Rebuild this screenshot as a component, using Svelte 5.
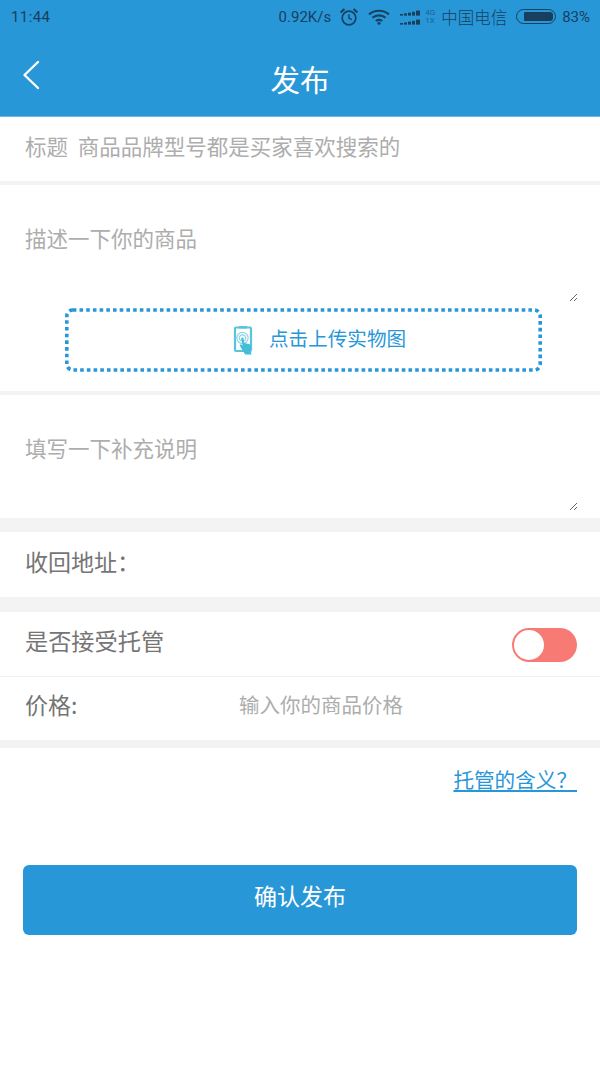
<script>
  let hosted = $state(true);
</script>

<div class="page">
  <header class="head">
    <div class="status">
      <span class="time">11:44</span>
      <div class="status-right">
        <span class="speed">0.92K/s</span>
        <svg class="ic-alarm" width="20" height="20" viewBox="0 0 20 20" fill="none" stroke="#17405f" stroke-width="1.7">
          <circle cx="10" cy="11" r="6.8" />
          <path d="M10 7.2V11.2L12.8 12.6" stroke-width="1.4" />
          <path d="M1.6 5.6 5.4 2M18.4 5.6 14.6 2" stroke-width="2.1" />
        </svg>
        <svg class="ic-wifi" width="22" height="16" viewBox="0 0 22 16" fill="none" stroke="#17405f" stroke-width="2.1">
          <path d="M1 5.4C6.6.6 15.4.6 21 5.4" />
          <path d="M4.4 8.8C8.2 5.6 13.8 5.6 17.6 8.8" />
          <path d="M7.8 12C9.8 10.6 12.2 10.6 14.2 12" />
          <circle cx="11" cy="14.2" r="1.5" fill="#17405f" stroke="none" />
        </svg>
        <svg class="ic-signal" width="21" height="16" viewBox="0 0 21 16" fill="#17405f">
          <rect x="0" y="5" width="3" height="1.6" /><rect x="4" y="4.4" width="3" height="2.2" /><rect x="8" y="3.6" width="3" height="3" /><rect x="12" y="2.8" width="3" height="3.8" /><rect x="16" y="1.6" width="4" height="5" />
          <rect x="0" y="14" width="3" height="1.6" /><rect x="4" y="13.4" width="3" height="2.2" /><rect x="8" y="12.6" width="3" height="3" /><rect x="12" y="11.8" width="3" height="3.8" /><rect x="16" y="10.6" width="4" height="5" />
        </svg>
        <span class="net"><span>4G</span><span>1X</span></span>
        <span class="carrier">中国电信</span>
        <span class="battery"><span class="battery-fill"></span></span>
        <span class="pct">83%</span>
      </div>
    </div>
    <div class="nav">
      <button class="back" aria-label="返回">
        <svg width="18" height="30" viewBox="0 0 18 30" fill="none" stroke="#fff" stroke-width="2.4" stroke-linecap="round" stroke-linejoin="round">
          <path d="M16 2 2.5 15 16 28" />
        </svg>
      </button>
      <h1>发布</h1>
    </div>
  </header>

  <section class="title-row">
    <input class="title-input" placeholder="标题  商品品牌型号都是买家喜欢搜索的" />
  </section>

  <section class="desc">
    <textarea class="area area-top" placeholder="描述一下你的商品"></textarea>
    <button class="upload">
      <svg class="dots" width="477" height="64" viewBox="0 0 477 64" fill="none">
        <rect x="1.8" y="2" width="473.4" height="60" rx="6" stroke="#2897d8" stroke-width="3.6" stroke-dasharray="3.6 3.1" />
      </svg>
      <svg width="24" height="30" viewBox="0 0 24 30">
        <rect x="3" y="2.5" width="16" height="23.5" rx="1" fill="#fff" stroke="#5cc3dc" stroke-width="2.2" />
        <rect x="7" y="1" width="8" height="2.5" fill="#5cc3dc" />
        <circle cx="10.5" cy="13" r="5.6" fill="none" stroke="#8fd6e6" stroke-width="1.2" />
        <circle cx="10.5" cy="13" r="3.2" fill="none" stroke="#8fd6e6" stroke-width="1.2" />
        <path d="M9.2 13.5c0-1.4 2.4-1.4 2.4 0l.6 4.6 4.8 1c1.4.4 2.2 1.2 2 2.6l-.4 4.6 1 3.2h-6.4l-4.4-7-1.2-2.6 1.6-.6 1.6 1.4z" fill="#45bcd8" />
      </svg>
      <span class="upload-text">点击上传实物图</span>
    </button>
  </section>

  <section class="note">
    <textarea class="area area-note" placeholder="填写一下补充说明"></textarea>
  </section>

  <section class="row address">
    <span class="label">收回地址：</span>
  </section>

  <section class="hosting">
    <div class="row row-switch">
      <span class="label switch-label">是否接受托管</span>
      <button class="switch" class:on={hosted} aria-label="是否接受托管" onclick={() => (hosted = !hosted)}>
        <span class="knob"></span>
      </button>
    </div>
    <div class="row row-price">
      <span class="label price-label">价格:</span>
      <input class="price-input" placeholder="输入你的商品价格" />
    </div>
  </section>

  <div class="link-row">
    <a href="#meaning">托管的含义？</a>
  </div>

  <div class="submit-wrap">
    <button class="submit">确认发布</button>
  </div>
</div>

<style>
  :global(body) {
    background: #fff;
    font-family: "Noto Sans CJK SC", "Noto Sans", sans-serif;
  }

  .page {
    width: 600px;
    height: 1067px;
    overflow: hidden;
    background: #fff;
  }

  .head {
    height: 116px;
    background: #2897d8;
    border-bottom: 1px solid #6fb9e6;
  }

  .status {
    height: 33px;
    padding: 0 10px 0 11px;
    display: flex;
    align-items: center;
    justify-content: space-between;
    color: #17405f;
    font-family: Roboto, sans-serif;
    font-size: 15px;
  }

  .time { letter-spacing: 0.4px; }

  .status-right {
    display: flex;
    align-items: center;
  }

  .speed { margin-right: 8px; }
  .ic-alarm { margin-right: 9px; }
  .ic-wifi { margin-right: 10px; }
  .ic-signal { margin-right: 4px; }

  .net {
    display: flex;
    flex-direction: column;
    font-size: 8px;
    line-height: 8px;
    margin-right: 6px;
    opacity: 0.6;
  }

  .carrier {
    font-family: "Noto Sans CJK SC", sans-serif;
    font-size: 16.5px;
    font-weight: 300;
    margin-right: 9px;
  }

  .battery {
    width: 40px;
    height: 15px;
    box-sizing: border-box;
    border: 1.5px solid #17405f;
    border-radius: 7.5px;
    padding: 2px 2.5px 2px 7px;
    margin-right: 6px;
    display: flex;
  }

  .battery-fill {
    flex: 1;
    background: #17405f;
    border-radius: 1px 3px 3px 1px;
  }

  .nav {
    height: 83px;
    display: flex;
    align-items: center;
    justify-content: center;
    position: relative;
  }

  .nav h1 {
    margin: 9px 0 0;
    color: #fff;
    font-size: 29.5px;
    font-weight: 400;
    line-height: 1;
  }

  .back {
    position: absolute;
    left: 22px;
    top: 27px;
    padding: 0;
    border: none;
    background: none;
    display: flex;
  }

  input, textarea {
    border: none;
    outline: none;
    background: transparent;
    font-family: inherit;
    padding: 0;
    margin: 0;
  }

  input::placeholder, textarea::placeholder {
    color: #adadad;
    opacity: 1;
  }

  .title-row {
    height: 64px;
    border-bottom: 4px solid #f3f3f3;
    display: flex;
    align-items: center;
    padding: 0 25px;
  }

  .title-input {
    width: 100%;
    font-size: 21.5px;
    white-space: pre;
    padding-bottom: 7px;
  }

  .desc {
    height: 206px;
    border-bottom: 4px solid #f3f3f3;
    display: flex;
    flex-direction: column;
  }

  .area {
    display: block;
    box-sizing: border-box;
    width: 578px;
    margin-left: 0;
    padding: 0 0 0 25px;
    font-size: 21.5px;
    line-height: 30px;
  }

  .area-top {
    height: 117px;
    padding-top: 38px;
  }

  .upload {
    position: relative;
    width: 477px;
    height: 64px;
    margin: 6px 0 0 65px;
    border: none;
    background: #fff;
    color: #2897d8;
    font-family: inherit;
    font-size: 19.6px;
    display: flex;
    align-items: center;
    justify-content: center;
    gap: 13px;
    padding: 0 0 0 31px;
  }

  .upload-text { padding-bottom: 6px; }

  .dots {
    position: absolute;
    left: 0;
    top: 0;
  }

  .note { height: 123px; }

  .area-note {
    height: 116px;
    padding-top: 38px;
  }

  .row {
    display: flex;
    align-items: center;
    padding: 0 23px 0 25px;
    background: #fff;
  }

  .label {
    color: #757575;
    font-size: 23px;
    padding-bottom: 8px;
  }

  .address {
    height: 65px;
    border-top: 14px solid #f3f3f3;
    border-bottom: 15px solid #f3f3f3;
  }

  .hosting { border-bottom: 8px solid #f3f3f3; }

  .row-switch {
    height: 64px;
    justify-content: space-between;
    border-bottom: 1px solid #f1f1f1;
  }

  .switch-label {
    font-size: 23.2px;
    padding-bottom: 9px;
  }

  .row-price { height: 63px; }

  .price-label {
    width: 214px;
    padding-bottom: 10px;
  }

  .price-input {
    flex: 1;
    min-width: 0;
    font-size: 20.5px;
    padding-bottom: 9px;
  }

  .switch {
    width: 65px;
    height: 34px;
    padding: 0;
    border: none;
    border-radius: 17px;
    background: #d8d8d8;
    display: flex;
    align-items: center;
    margin-top: 2px;
  }

  .switch.on { background: #f77a74; }

  .knob {
    width: 30px;
    height: 30px;
    margin-left: 2px;
    border-radius: 50%;
    background: #fff;
  }

  .link-row {
    height: 117px;
    box-sizing: border-box;
    padding: 16px 23px 0 0;
    text-align: right;
  }

  .link-row a {
    color: #2897d8;
    font-size: 20.6px;
  }

  .submit-wrap { padding: 0 23px; }

  .submit {
    width: 100%;
    height: 70px;
    border: none;
    border-radius: 6px;
    background: #2897d8;
    color: #fff;
    font-family: inherit;
    font-size: 23px;
    padding: 0 0 10px;
  }
</style>
